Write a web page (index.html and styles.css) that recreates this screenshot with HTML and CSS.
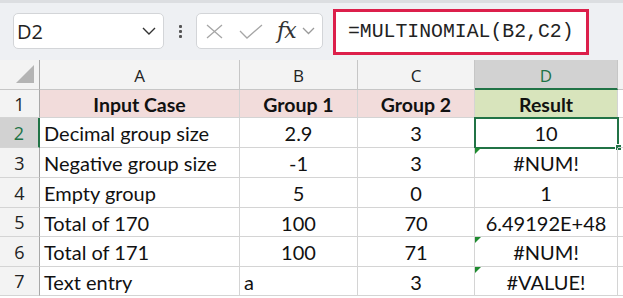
FILE: index.html
```html
<!DOCTYPE html>
<html>
<head>
<meta charset="utf-8">
<link rel="stylesheet" href="styles.css">
</head>
<body>
<div class="app">
  <div class="toolbar">
    <div class="namebox">
      <span class="name">D2</span>
      <svg class="chev" width="14" height="8" viewBox="0 0 14 8"><path d="M1 1 L7 7 L13 1" fill="none" stroke="#333" stroke-width="1.4"/></svg>
    </div>
    <div class="dots"><span></span><span></span><span></span></div>
    <div class="fbuttons">
      <svg width="17" height="15" viewBox="0 0 17 15"><path d="M1 1 L16 14 M16 1 L1 14" stroke="#a6a6a6" stroke-width="1.3" fill="none"/></svg>
      <svg width="24" height="15" viewBox="0 0 24 15"><path d="M1 7 L8 14 L23 1" stroke="#a6a6a6" stroke-width="1.3" fill="none"/></svg>
      <span class="fx">fx</span>
      <svg width="13" height="8" viewBox="0 0 13 8"><path d="M1 1 L6.5 6.5 L12 1" fill="none" stroke="#9a9a9a" stroke-width="1.3"/></svg>
    </div>
    <div class="formula">=MULTINOMIAL(B2,C2)</div>
  </div>
  <div class="sheet">
    <div class="corner"><div class="tri"></div></div>
    <div class="ch">A</div>
    <div class="ch">B</div>
    <div class="ch">C</div>
    <div class="ch ch-sel">D</div>
    <div class="ch ch-end"></div>

    <div class="rh">1</div>
    <div class="c hd">Input Case</div>
    <div class="c hd">Group 1</div>
    <div class="c hd">Group 2</div>
    <div class="c hd res">Result</div>
    <div class="c end"></div>

    <div class="rh rh-sel">2</div>
    <div class="c">Decimal group size</div>
    <div class="c ctr">2.9</div>
    <div class="c ctr">3</div>
    <div class="c ctr sel">10<span class="handle"></span></div>
    <div class="c end"></div>

    <div class="rh">3</div>
    <div class="c">Negative group size</div>
    <div class="c ctr">-1</div>
    <div class="c ctr">3</div>
    <div class="c ctr err">#NUM!</div>
    <div class="c end"></div>

    <div class="rh">4</div>
    <div class="c">Empty group</div>
    <div class="c ctr">5</div>
    <div class="c ctr">0</div>
    <div class="c ctr">1</div>
    <div class="c end"></div>

    <div class="rh">5</div>
    <div class="c">Total of 170</div>
    <div class="c ctr">100</div>
    <div class="c ctr">70</div>
    <div class="c ctr">6.49192E+48</div>
    <div class="c end"></div>

    <div class="rh">6</div>
    <div class="c">Total of 171</div>
    <div class="c ctr">100</div>
    <div class="c ctr">71</div>
    <div class="c ctr err">#NUM!</div>
    <div class="c end"></div>

    <div class="rh">7</div>
    <div class="c">Text entry</div>
    <div class="c">a</div>
    <div class="c ctr">3</div>
    <div class="c ctr err">#VALUE!</div>
    <div class="c end"></div>
  </div>
</div>
</body>
</html>
```
FILE: styles.css
```css
* { box-sizing: border-box; }
html, body { margin: 0; padding: 0; background: #fff; }
.app { width: 623px; height: 298px; overflow: hidden; }

.toolbar {
  height: 60px;
  background: #eef0f3;
  border-top: 3px solid #dcdee1;
  display: flex;
  align-items: flex-start;
  padding: 10px 0 0 13px;
  position: relative;
}
.namebox {
  width: 151px;
  height: 36px;
  background: #fff;
  border: 1px solid #d3d5d8;
  border-radius: 5px;
  display: flex;
  align-items: center;
  justify-content: space-between;
  padding: 0 7px 0 3px;
}
.name { font-family: "Open Sans", sans-serif; font-size: 20px; color: #222; }
.dots {
  width: 32px;
  height: 36px;
  display: flex;
  flex-direction: column;
  align-items: center;
  justify-content: center;
  gap: 2px;
}
.dots span { width: 3px; height: 3px; background: #555; border-radius: 1px; }
.fbuttons {
  width: 127px;
  height: 36px;
  background: #fff;
  border: 1px solid #d3d5d8;
  border-radius: 5px;
  display: flex;
  align-items: center;
  padding: 0 0 0 9px;
  gap: 0;
}
.fbuttons svg:nth-child(1) { margin-right: 16px; }
.fbuttons svg:nth-child(2) { margin-right: 14px; }
.fx {
  font-family: "DejaVu Serif", "Liberation Serif", serif;
  font-style: italic;
  font-size: 22px;
  color: #333;
  margin-right: 6px;
  line-height: 1;
  letter-spacing: -1px;
}
.formula {
  margin-left: 10px;
  margin-top: -4px;
  width: 256px;
  height: 46px;
  background: #fff;
  border: 3px solid #dc1f4b;
  font-family: "Liberation Mono", monospace;
  font-size: 19.8px;
  color: #222;
  padding: 9px 0 0 12px;
  line-height: 22px;
}

.sheet {
  display: grid;
  grid-template-columns: 40px 200px 118px 117px 143px 5px;
  grid-template-rows: 30px 28px 30px 30px 30px 29px 30px 29px;
  font-family: "Lato", "Liberation Sans", sans-serif;
  font-size: 20px;
  color: #111;
}
.corner {
  background: #f3f3f3;
  border-right: 1px solid #a8a8a8;
  border-bottom: 1px solid #c6c6c6;
  position: relative;
}
.tri {
  position: absolute;
  right: 5px;
  bottom: 6px;
  width: 0; height: 0;
  border-left: 18px solid transparent;
  border-bottom: 18px solid #b4b4b4;
}
.ch {
  background: #f3f3f3;
  border-right: 1px solid #c6c6c6;
  border-bottom: 1px solid #c6c6c6;
  display: flex;
  align-items: center;
  justify-content: center;
  font-family: "Open Sans", sans-serif;
  font-size: 17px;
  color: #222;
  padding-top: 2px;
}
.ch-sel { background: #d2d2d2; color: #217346; border-bottom: 2px solid #217346; }
.ch-end { border-right: none; background: #f3f3f3; }
.rh {
  background: #f3f3f3;
  border-right: 1px solid #a8a8a8;
  border-bottom: 1px solid #d4d4d4;
  display: flex;
  align-items: center;
  justify-content: center;
  font-family: "Open Sans", sans-serif;
  font-size: 18px;
  color: #222;
}
.rh-sel { background: #d2d2d2; color: #217346; border-right: 2px solid #217346; }
.c {
  border-right: 1px solid #d4d4d4;
  border-bottom: 1px solid #d4d4d4;
  display: flex;
  align-items: center;
  padding: 1px 4px 0;
  white-space: nowrap;
  position: relative;
}
.ctr { justify-content: center; }
.hd { background: #f2dcdb; font-weight: 700; justify-content: center; font-size: 19.5px; }
.res { background: #d8e4bc; }
.end { border-right: none; }
.sel { outline: 2px solid #217346; outline-offset: -1px; }
.handle {
  position: absolute;
  right: -5px;
  bottom: -4px;
  width: 7px;
  height: 7px;
  background: #217346;
  border: 1px solid #fff;
}
.err::before {
  content: "";
  position: absolute;
  left: 0;
  top: 0;
  width: 0; height: 0;
  border-top: 6px solid #1e8b2f;
  border-right: 6px solid transparent;
}
```
